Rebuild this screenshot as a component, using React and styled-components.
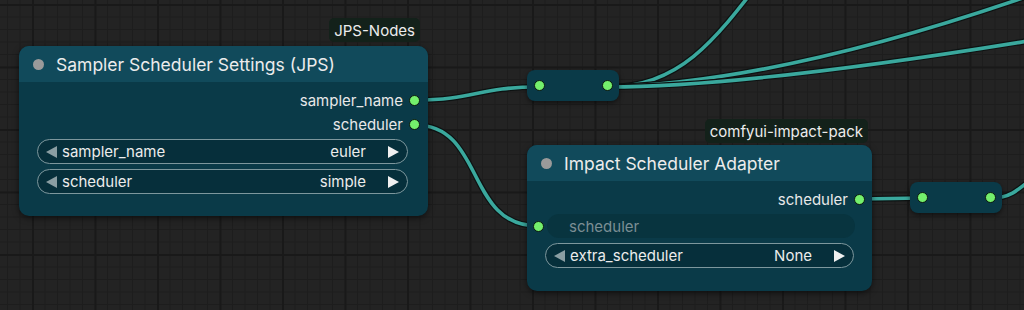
import React from "react";
import styled, { createGlobalStyle } from "styled-components";

const GlobalStyle = createGlobalStyle`
  html, body { margin: 0; padding: 0; background: #222; }
  body { font-family: Inter, "Noto Sans", "Liberation Sans", sans-serif; }
`;

const Canvas = styled.div`
  position: relative;
  width: 1024px;
  height: 310px;
  overflow: hidden;
  background-color: #232323;
  background-image:
    linear-gradient(to right, #191919 2px, transparent 2px),
    linear-gradient(to bottom, #191919 2px, transparent 2px),
    linear-gradient(to right, #1d1d1d 1px, transparent 1px),
    linear-gradient(to bottom, #1d1d1d 1px, transparent 1px);
  background-size: 62.5px 62.5px, 62.5px 62.5px, 12.5px 12.5px, 12.5px 12.5px;
  background-position: 32px 4px, 32px 4px, 7px 4px, 7px 4px;
`;

const Wires = styled.svg`
  position: absolute;
  left: 0;
  top: 0;
  pointer-events: none;
`;

const Node = styled.div`
  position: absolute;
  left: ${(p) => p.$x}px;
  top: ${(p) => p.$y}px;
  width: ${(p) => p.$w}px;
  height: ${(p) => p.$h}px;
  background: #0a3a48;
  border-radius: 10px;
  box-shadow: 0 2px 6px rgba(0, 0, 0, 0.55);
  display: flex;
  flex-direction: column;
`;

const Badge = styled.div`
  position: absolute;
  right: ${(p) => p.$right}px;
  bottom: calc(100% + ${(p) => p.$gap}px);
  height: 24px;
  padding: 0 5px;
  display: flex;
  align-items: center;
  background: #13211a;
  color: #ececec;
  font-size: 15px;
  border-radius: 5px;
`;

const Header = styled.div`
  height: 36px;
  flex: none;
  display: flex;
  align-items: center;
  gap: 12px;
  padding-left: 14px;
  background: #114a5b;
  border-radius: 10px 10px 0 0;
  color: #ececec;
  font-size: 17.5px;
`;

const HeaderDot = styled.span`
  width: 11px;
  height: 11px;
  border-radius: 50%;
  background: #9a9a9a;
`;

const Body = styled.div`
  display: flex;
  flex-direction: column;
  padding-top: 6px;
`;

const OutputRow = styled.div`
  height: 24px;
  display: flex;
  align-items: center;
  justify-content: flex-end;
  gap: 6px;
  padding-right: ${(p) => p.$pr}px;
  color: #e8e8e8;
  font-size: 15px;
`;

const Dot = styled.span`
  width: 9px;
  height: 9px;
  border-radius: 50%;
  background: #74ef6c;
  border: 1px solid #0b1a10;
  flex: none;
`;

const InputRow = styled.div`
  height: 24px;
  margin-top: 3px;
  display: flex;
  align-items: center;
  padding-left: 6px;
  color: #7b8e94;
  font-size: 15px;
`;

const InputPill = styled.div`
  flex: 1;
  height: 24px;
  margin: 0 17px 0 3px;
  display: flex;
  align-items: center;
  padding-left: 22px;
  border-radius: 12px;
  background: #08343f;
`;

const Combo = styled.div`
  height: 23px;
  margin: ${(p) => p.$mt}px ${(p) => p.$mr}px 0 18px;
  border: 1px solid #7d979d;
  border-radius: 13px;
  background: #062f3b;
  display: flex;
  align-items: center;
  padding: 0 8px 0 7px;
  color: #ececec;
  font-size: 15px;
`;

const Label = styled.span`
  flex: 1;
  margin-left: 5px;
`;

const Value = styled.span`
  margin-right: 21px;
`;

const Reroute = styled.div`
  position: absolute;
  left: ${(p) => p.$x}px;
  top: ${(p) => p.$y}px;
  width: 92px;
  height: 31px;
  border-radius: 8px;
  background: #0a3a48;
  box-shadow: 0 2px 5px rgba(0, 0, 0, 0.5);
  display: flex;
  align-items: center;
  justify-content: space-between;
  padding: 0 6px 0 7px;
  box-sizing: border-box;
`;

const Arrow = ({ dir }) => (
  <svg width="12" height="14" viewBox="0 0 12 14">
    {dir === "left" ? (
      <polygon points="12,1 12,13 1,7" fill="#8a9ea3" />
    ) : (
      <polygon points="1,1 1,13 12,7" fill="#f0f0f0" />
    )}
  </svg>
);

const ComboWidget = ({ label, value, mt, mr }) => (
  <Combo $mt={mt} $mr={mr}>
    <Arrow dir="left" />
    <Label>{label}</Label>
    <Value>{value}</Value>
    <Arrow dir="right" />
  </Combo>
);

const wires = [
  "M415 100 C 475 100, 478 87, 538 87",
  "M415 125 C 485 125, 465 226, 538 226",
  "M608 87 C 680 87, 715 40, 765 -25",
  "M608 87 C 720 84, 860 55, 1040 -8",
  "M608 87 C 720 87, 900 62, 1040 39",
  "M860 199 L 922 198",
  "M992 198 C 1012 198, 1020 188, 1040 172",
];

export default function App() {
  return (
    <>
      <GlobalStyle />
      <Canvas>
        <Wires width="1024" height="310">
          {wires.map((d, i) => (
            <g key={i}>
              <path d={d} stroke="#0d1212" strokeWidth="6" fill="none" />
              <path d={d} stroke="#3aa89d" strokeWidth="3.6" fill="none" />
            </g>
          ))}
        </Wires>

        <Node $x={19} $y={46} $w={409} $h={170}>
          <Badge $right={8} $gap={4}>JPS-Nodes</Badge>
          <Header>
            <HeaderDot />
            Sampler Scheduler Settings (JPS)
          </Header>
          <Body>
            <OutputRow $pr={8}>
              sampler_name <Dot />
            </OutputRow>
            <OutputRow $pr={8}>
              scheduler <Dot />
            </OutputRow>
            <ComboWidget label="sampler_name" value="euler" mt={3} mr={20} />
            <ComboWidget label="scheduler" value="simple" mt={5} mr={20} />
          </Body>
        </Node>

        <Node $x={527} $y={145} $w={345} $h={146}>
          <Badge $right={4} $gap={2}>comfyui-impact-pack</Badge>
          <Header>
            <HeaderDot />
            Impact Scheduler Adapter
          </Header>
          <Body>
            <OutputRow $pr={7}>
              scheduler <Dot />
            </OutputRow>
            <InputRow>
              <Dot />
              <InputPill>scheduler</InputPill>
            </InputRow>
            <ComboWidget label="extra_scheduler" value="None" mt={5} mr={18} />
          </Body>
        </Node>

        <Reroute $x={527} $y={70}>
          <Dot />
          <Dot />
        </Reroute>
        <Reroute $x={910} $y={182}>
          <Dot />
          <Dot />
        </Reroute>
      </Canvas>
    </>
  );
}
